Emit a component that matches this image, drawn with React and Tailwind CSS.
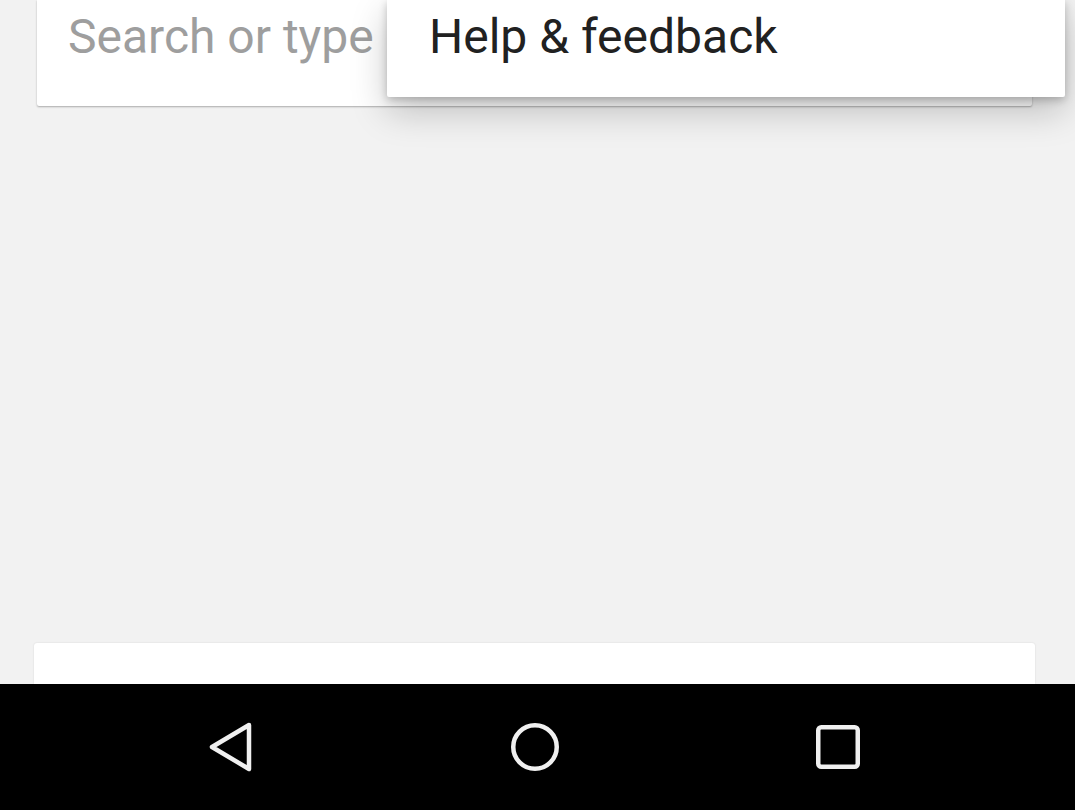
import React from 'react';

const BackIcon = () => (
  <svg width="48" height="52" viewBox="0 0 48 52" fill="none" stroke="#f0f0f0" strokeWidth="4.5" strokeLinejoin="round" strokeLinecap="round">
    <path d="M41 4 L4 26 L41 48 Z" />
  </svg>
);

const HomeIcon = () => (
  <svg width="52" height="52" viewBox="0 0 52 52" fill="none" stroke="#f0f0f0" strokeWidth="4.5">
    <circle cx="26" cy="26" r="21.75" />
  </svg>
);

const RecentsIcon = () => (
  <svg width="48" height="48" viewBox="0 0 48 48" fill="none" stroke="#f0f0f0" strokeWidth="4.5">
    <rect x="4.25" y="4.25" width="39.5" height="39.5" rx="3" />
  </svg>
);

export default function App() {
  return (
    <div className="relative w-[1075px] h-[810px] overflow-hidden bg-[#f2f2f2] flex flex-col font-['Roboto',sans-serif]">
      {/* Search box */}
      <div className="ml-[37px] w-[995px] h-[106px] bg-white shadow-[0_1px_2px_rgba(0,0,0,0.3)] rounded-b-[2px] pl-[31px] pt-[13px]">
        <span className="text-[48px] leading-[48px] text-[#9e9e9e]">Search or type</span>
      </div>

      {/* Overflow menu */}
      <div className="absolute top-0 left-[387px] w-[678px] h-[97px] bg-white rounded-b-[2px] shadow-[0_14px_36px_rgba(0,0,0,0.22),0_3px_8px_rgba(0,0,0,0.22)] pl-[42px] pt-[13px]">
        <span className="text-[48px] leading-[48px] text-[#212121]">Help &amp; feedback</span>
      </div>

      <div className="flex-1" />

      {/* Card peeking above nav bar */}
      <div className="ml-[34px] w-[1001px] h-[41px] bg-white rounded-t-[3px] shadow-[0_0_2px_rgba(0,0,0,0.12)]" />

      {/* Android nav bar */}
      <div className="h-[126px] bg-black flex items-center pl-[182px] gap-[203px]">
        <div className="w-[100px] flex justify-center"><BackIcon /></div>
        <div className="w-[100px] flex justify-center"><HomeIcon /></div>
        <div className="w-[100px] flex justify-center"><RecentsIcon /></div>
      </div>
    </div>
  );
}
